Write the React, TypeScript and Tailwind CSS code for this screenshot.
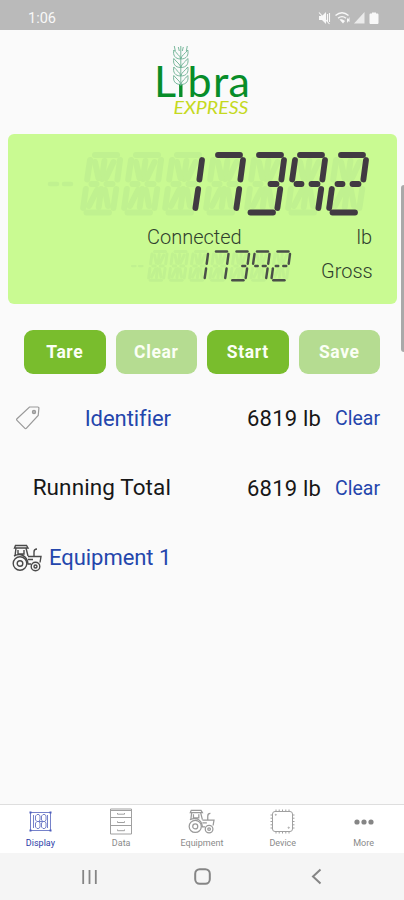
import type { ReactNode } from "react";

type Line = [number, number, number, number];

// Segment centre lines inside one slanted character cell
const SEGMENTS: Record<string, Line> = {
  a: [16, 5, 38, 5],
  b: [41, 10, 38.4, 29.5],
  c: [37.2, 39, 34.4, 58],
  d: [7.5, 62.5, 30, 62.5],
  e: [6.8, 39, 4.2, 58],
  f: [11, 10, 8.2, 29.5],
  g: [12.5, 34, 17.5, 34],
  h: [27.5, 34, 33.5, 34],
  i: [25.4, 11, 23, 29],
  j: [22, 39, 19.8, 57],
  k: [16, 12, 19.5, 28],
  l: [34.5, 12, 27, 28],
  m: [18, 40, 10, 56],
  n: [26, 40, 29, 56],
};

const DIGITS: Record<string, string> = {
  " ": "",
  "1": "bc",
  "2": "abghed",
  "3": "abhcd",
  "7": "abc",
  "9": "abcfgh",
};

interface LcdProps {
  value: string;
  width: number;
  height: number;
  stroke: number;
  color: string;
  ghost: string;
}

function Lcd({ value, width, height, stroke, color, ghost }: LcdProps) {
  const cells = value.padStart(7, " ").split("");
  const draw = (key: string, tint: string, w: number) => {
    const [x1, y1, x2, y2] = SEGMENTS[key];
    return <line key={key} x1={x1} y1={y1} x2={x2} y2={y2} stroke={tint} strokeWidth={w} />;
  };
  return (
    <svg
      role="img"
      aria-label={value}
      width={width}
      height={height}
      viewBox="0 0 324 68"
      strokeLinecap="round"
      className="block"
    >
      {/* Unlit minus sign */}
      <g stroke={ghost} strokeWidth={4.5}>
        <line x1={4} y1={34} x2={11} y2={34} />
        <line x1={18} y1={34} x2={25} y2={34} />
      </g>
      {cells.map((_, i) => (
        <g key={i} transform={`translate(${33 + i * 41} 0)`}>
          {Object.keys(SEGMENTS).map((s) => draw(s, ghost, 6))}
        </g>
      ))}
      {cells.map((ch, i) => (
        <g key={i} transform={`translate(${33 + i * 41} 0)`}>
          {DIGITS[ch].split("").map((s) => draw(s, color, stroke))}
        </g>
      ))}
    </svg>
  );
}

function Logo() {
  return (
    <svg width="104" height="76" viewBox="0 0 104 76" className="block">
      <g fill="#078d29" fontFamily="Lato, sans-serif" fontSize="43">
        <text x="3" y="53">L</text>
        <text x="36.5" y="53">b</text>
        <text x="62" y="53">r</text>
        <text x="77.5" y="53">a</text>
      </g>
      <path d="M29.8 40v13" stroke="#078d29" strokeWidth="3.4" />
      {/* Wheat ear in place of the dot */}
      <g fill="none" stroke="#6bb092" strokeWidth="0.9">
        <path d="M29.8 2v40M23.300 2l1 5M36.300 2l-1 5M27.300 3l1 4M32.300 3l-1 4" />
        {[6, 14.5, 23, 31.5].map((y) => (
          <g key={y} transform={`translate(29.8 ${y})`}>
            <path d="M0 9C-1 5-4 4-7 0c-1 5 1 9 7 9ZM0 9C1 5 4 4 7 0c1 5-1 9-7 9Z" />
          </g>
        ))}
      </g>
      <text
        x="22.5"
        y="70"
        fill="#c5d91f"
        fontFamily="Lato, sans-serif"
        fontStyle="italic"
        fontSize="18"
        textLength="75"
        lengthAdjust="spacingAndGlyphs"
      >
        EXPRESS
      </text>
    </svg>
  );
}

function Tractor({ className }: { className: string }) {
  return (
    <svg viewBox="0 0 30 28" fill="none" stroke="currentColor" strokeWidth="1.4" className={className}>
      <circle cx="8" cy="19.5" r="6.8" />
      <circle cx="8" cy="19.5" r="2.8" />
      <circle cx="23.5" cy="22.5" r="4.3" />
      <circle cx="23.5" cy="22.5" r="1.5" />
      <path d="M3.5 1.5h11L16 4H2.500ZM4 4 3 12M14 4l2 8M6 6v4h6V6M2 12c6-3 13-1 14 8h3" />
      <path d="M16 12.5h13l-1 6M16 15.5h5M22 12V8c0-2 1-3 3-3" />
    </svg>
  );
}

function TagIcon() {
  return (
    <svg width="24" height="24" viewBox="0 0 24 24" fill="none" stroke="#999999" strokeWidth="1.2">
      <path d="M13.5 1h8.2c.8 0 1.3.5 1.2 1.3l-.7 7.2L10.500 22.2c-.6.7-1.2.7-1.8 0L1 14.3c-.6-.6-.5-1.1 0-1.6Z" />
      <circle cx="18" cy="6" r="1.6" fill="#b5b5b5" />
    </svg>
  );
}

function DisplayIcon() {
  return (
    <svg width="23" height="21" viewBox="0 0 23 21" fill="none" stroke="#6674c4" strokeWidth="0.9">
      <path d="M1.5 1.5h20v18h-20z" />
      <path d="M4.5 4v13M18.5 4v13M6.5 5 8 3.5h2L11 5v4l-1.2 1.500L11 12v4l-1.2 1.500H8L6.500 16v-4L8 10.500 6.500 9ZM12.500 5 14 3.500h2L17 5v4l-1.200 1.500L17 12v4l-1.200 1.500H14L12.500 16v-4l1.500-1.500L12.500 9ZM8 10.500h8" />
      <path d="M.5.5h2v2h-2zM20.5.5h2v2h-2zM.5 18.5h2v2h-2zM20.5 18.5h2v2h-2z" fill="#4c5dbb" stroke="none" />
    </svg>
  );
}

function DrawersIcon() {
  return (
    <svg width="22" height="27" viewBox="0 0 22 27" fill="none" stroke="#a0a0a0" strokeWidth="1">
      <path d="M.5 1h21v25H.5zM.5 9.5h21M.5 17.5h21M1 2.5h20" />
      <path d="M7.5 5v1.2h7V5M7.5 13.3v1.2h7v-1.2M7.5 21.5v1.2h7v-1.2" />
    </svg>
  );
}

function ChipIcon() {
  return (
    <svg width="25" height="25" viewBox="0 0 25 25" fill="none" stroke="#a0a0a0" strokeWidth="1">
      <rect x="2.5" y="2.5" width="20" height="20" rx="2.5" />
      <path d="M6 2.5v-2M9.2 2.5v-2M12.5 2.5v-2M15.8 2.5v-2M19 2.5v-2M6 24.5v-2M9.2 24.5v-2M12.5 24.5v-2M15.8 24.5v-2M19 24.5v-2" />
      <path d="M2.5 6h-2M2.5 9.2h-2M2.5 12.5h-2M2.5 15.8h-2M2.5 19h-2M24.5 6h-2M24.5 9.2h-2M24.5 12.5h-2M24.5 15.8h-2M24.5 19h-2" />
      <circle cx="5.8" cy="5.8" r=".5" />
      <circle cx="18.7" cy="18.7" r=".6" />
    </svg>
  );
}

function MoreIcon() {
  return (
    <svg width="20" height="6" viewBox="0 0 20 6" fill="#858585">
      <circle cx="3" cy="3" r="2.6" />
      <circle cx="10" cy="3" r="2.6" />
      <circle cx="17" cy="3" r="2.6" />
    </svg>
  );
}

function StatusIcons() {
  return (
    <svg width="62" height="14" viewBox="0 0 62 14" fill="#f8f8f8">
      {/* Muted speaker */}
      <path d="M1 5h3l4-4v12L4 9H1z" />
      <path d="M1 1.5 11.5 13M9.5 3v8M11.5 2v9" stroke="#f8f8f8" strokeWidth="1.1" fill="none" />
      {/* Wi-Fi */}
      <path d="M17.5 4.5c4-3.5 9-3.5 13 0M20 7.2c2.5-2 5.5-2 8 0" stroke="#f8f8f8" strokeWidth="1.4" fill="none" />
      <path d="m21.5 8.5 3.5 4 2-2.5c-2-1.5-3.5-2-5.5-1.5ZM29 12V7l2 2M31.5 6v5l-2-1.5" />
      {/* Signal and battery */}
      <path d="M46.5 1v11.5H36z" opacity=".8" />
      <path d="M54 1.5h4v1h1.2c.8 0 1.3.5 1.3 1.3v7.9c0 .8-.5 1.3-1.3 1.3h-6.4c-.8 0-1.3-.5-1.3-1.3V3.8c0-.8.5-1.3 1.3-1.3H54z" />
    </svg>
  );
}

const BUTTONS = [
  { label: "Tare", enabled: true },
  { label: "Clear", enabled: false },
  { label: "Start", enabled: true },
  { label: "Save", enabled: false },
];

const TABS: { label: string; icon: ReactNode; active?: boolean }[] = [
  { label: "Display", icon: <DisplayIcon />, active: true },
  { label: "Data", icon: <DrawersIcon /> },
  { label: "Equipment", icon: <Tractor className="h-[25px] w-[27px] text-[#999999]" /> },
  { label: "Device", icon: <ChipIcon /> },
  { label: "More", icon: <MoreIcon /> },
];

function TotalCells() {
  return (
    <>
      <span className="w-[75px] whitespace-nowrap text-[22px] tracking-[0.2px] text-[#171717]">6819 lb</span>
      <button className="ml-[13px] w-[47px] pt-px text-left text-[19.5px] text-[#2446ac]">Clear</button>
    </>
  );
}

export default function App() {
  return (
    <div className="relative flex h-[900px] w-[404px] flex-col overflow-hidden bg-[#fafafa] font-['Roboto',sans-serif]">
      <header className="flex h-[30px] shrink-0 items-start justify-between bg-[#bababa] pl-7 pr-[24px] pt-[11px]">
        <span className="text-[14.5px] leading-[15px] text-[#f8f8f8]">1:06</span>
        <StatusIcons />
      </header>

      <div className="flex h-[104px] shrink-0 justify-center pl-px pt-[14px]">
        <Logo />
      </div>

      {/* Scale readout */}
      <section className="ml-2 flex h-[170px] w-[389px] shrink-0 flex-col rounded-[6px] bg-[#c9fa92] pr-[25px] pt-4 text-[20px] font-light leading-6 text-[#2f402d]">
        <div className="flex justify-end pr-[2px]">
          <Lcd value="17392" width={324} height={68} stroke={5.8} color="#413a42" ghost="#c0f190" />
        </div>
        <div className="mt-[7px] flex justify-between pl-[139px]">
          <span>Connected</span>
          <span>lb</span>
        </div>
        <div className="flex items-center justify-end">
          <div className="mr-[29px]">
            <Lcd value="17392" width={162} height={34} stroke={4.8} color="#4a4f48" ghost="#c0f190" />
          </div>
          <span className="w-[51px] pt-[9px] text-right">Gross</span>
        </div>
      </section>

      <div className="mt-[26px] flex shrink-0 gap-[10px] px-6">
        {BUTTONS.map((b) => (
          <button
            key={b.label}
            className={`h-11 w-[82px] rounded-[9px] text-[17.5px] font-bold tracking-[0.6px] text-[#fbfff5] ${
              b.enabled ? "bg-[#79bd2d]" : "bg-[#b5dc91]"
            }`}
          >
            {b.label}
          </button>
        ))}
      </div>

      <main className="flex flex-1 flex-col pt-[9px]">
        <div className="flex h-[70px] items-center pl-4">
          <TagIcon />
          <span className="w-[131px] text-right text-[22px] tracking-[-0.05px] text-[#2446ac]">Identifier</span>
          <div className="ml-[76px] flex items-center">
            <TotalCells />
          </div>
        </div>
        <div className="flex h-[70px] items-center">
          <span className="w-[171px] text-right text-[22.5px] tracking-[0.1px] text-[#171717]">Running Total</span>
          <div className="ml-[76px] flex items-center">
            <TotalCells />
          </div>
        </div>
        <div className="flex h-[70px] items-center gap-[7px] pl-3">
          <Tractor className="h-[28px] w-[30px] text-[#4a4a4a]" />
          <span className="pb-[2px] text-[22px] tracking-[-0.05px] text-[#2446ac]">Equipment 1</span>
        </div>
      </main>

      {/* Tab bar */}
      <nav className="flex h-[49px] shrink-0 border-t border-[#dedede] bg-white">
        {TABS.map((t) => (
          <button
            key={t.label}
            className={`flex flex-1 flex-col items-center text-[9px] leading-[11px] ${
              t.active ? "text-[#2c40a8]" : "text-[#8a8a8a]"
            }`}
          >
            <span className="flex h-[33px] items-center">{t.icon}</span>
            {t.label}
          </button>
        ))}
      </nav>

      {/* System navigation */}
      <footer className="grid h-[47px] shrink-0 grid-cols-[178px_48px_178px] items-center justify-items-center bg-[#f5f5f5]">
        <svg width="15" height="16" viewBox="0 0 15 16" stroke="#858585" strokeWidth="1.8">
          <path d="M1.2 1v14M7.5 1v14M13.8 1v14" />
        </svg>
        <svg width="17" height="17" viewBox="0 0 17 17" fill="none" stroke="#858585" strokeWidth="2">
          <rect x="1.2" y="1.2" width="14.6" height="14.6" rx="4.5" />
        </svg>
        <svg width="12" height="17" viewBox="0 0 12 17" fill="none" stroke="#858585" strokeWidth="2" className="ml-[3px]">
          <path d="M9.5 1.5 2 8.5l7.500 7" />
        </svg>
      </footer>

      {/* Scroll thumb */}
      <div className="absolute right-0 top-[185px] h-[167px] w-[3px] rounded-l-[3px] bg-[#a9a9a9]" />
    </div>
  );
}
